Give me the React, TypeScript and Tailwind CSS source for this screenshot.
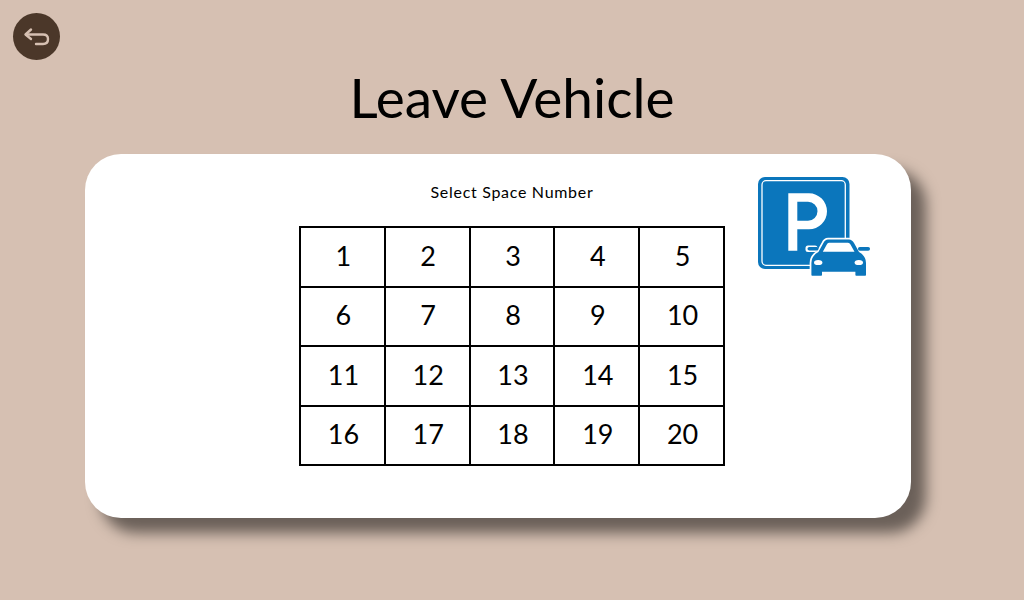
const spaces = Array.from({ length: 20 }, (_, i) => i + 1)

function ParkingIcon() {
  const car =
    'M70 62.5 H91 Q94 62.5 96 66 L101 75 Q108 79 108 86 V98 Q108 98.8 107.2 98.8 H98.2 Q97.4 98.8 97.4 98 V94.7 H64 V98 Q64 98.8 63.2 98.8 H54.2 Q53.4 98.8 53.4 98 V86 Q53.4 79 60.4 75 L65.4 66 Q67 62.5 70 62.5 Z'
  return (
    <svg width="112" height="100" viewBox="0 0 112 100" className="block shrink-0">
      <rect x="0" y="0" width="91.5" height="92" rx="7" fill="#0b76bc" />
      <rect x="4" y="3.7" width="83.3" height="84.6" rx="4" fill="none" stroke="#fff" strokeWidth="1.3" />
      <path
        fillRule="evenodd"
        fill="#fff"
        d="M30.3 16.3 H51 a18 18 0 0 1 0 36 H39.3 V73.7 H30.3 Z M39.3 24.7 V43.7 H50 a9.5 9.5 0 0 0 0-19 Z"
      />
      <path d={car} fill="#fff" stroke="#fff" strokeWidth="3.5" strokeLinejoin="round" />
      <rect x="47.5" y="68.5" width="12" height="6.5" rx="2.5" fill="#fff" />
      <path d={car} fill="#0b76bc" />
      <path d="M71 65.8 H90 Q91.5 65.8 92.5 67.5 L96.5 74.7 H64.8 L68.8 67.5 Q69.5 65.8 71 65.8 Z" fill="#fff" />
      <ellipse cx="60.2" cy="85.5" rx="4.2" ry="2.6" fill="#fff" />
      <ellipse cx="100.8" cy="85.5" rx="4.2" ry="2.6" fill="#fff" />
      <rect x="49.5" y="70" width="11" height="3.6" rx="1.8" fill="#0b76bc" />
      <rect x="100" y="70" width="12" height="3.8" rx="1.8" fill="#0b76bc" />
    </svg>
  )
}

function App() {
  return (
    <div className="h-[600px] w-[1024px] overflow-hidden bg-[#d6c0b2] font-['Lato',sans-serif] text-black">
      <div className="pl-[13px] pt-[13px]">
        <button className="flex h-[47px] w-[47px] items-center justify-center rounded-full bg-[#4b3729]">
          <svg width="28" height="22" viewBox="0 0 28 22" fill="none" stroke="#d6c0b2" strokeWidth="2.4" strokeLinecap="round" strokeLinejoin="round">
            <path d="M8 3.5 L2.5 8.5 L8 13" />
            <path d="M3 8.5 H20 Q25 8.5 25 13 Q25 18 20 18 H13" />
          </svg>
        </button>
      </div>

      <h1 className="h-[94px] pt-[4px] text-center text-[55px] leading-[66px]">Leave Vehicle</h1>

      <div className="ml-[85px] flex h-[364px] w-[826px] items-start rounded-[36px] bg-white pl-[214px] shadow-[15px_15px_14px_rgba(0,0,0,0.5)]">
        <div className="w-[426px]">
          <p className="mt-[28px] h-[44px] text-center text-[16px] leading-[20px] tracking-[0.7px]">Select Space Number</p>
          <div className="grid grid-cols-5 border-t-2 border-l-2 border-black">
            {spaces.map((n) => (
              <div
                key={n}
                className="flex h-[59.5px] items-center justify-center border-r-2 border-b-2 border-black pb-[2px] pl-[2px] text-[27px]"
              >
                {n}
              </div>
            ))}
          </div>
        </div>
        <div className="ml-[33px] mt-[23px]">
          <ParkingIcon />
        </div>
      </div>
    </div>
  )
}

export default App
